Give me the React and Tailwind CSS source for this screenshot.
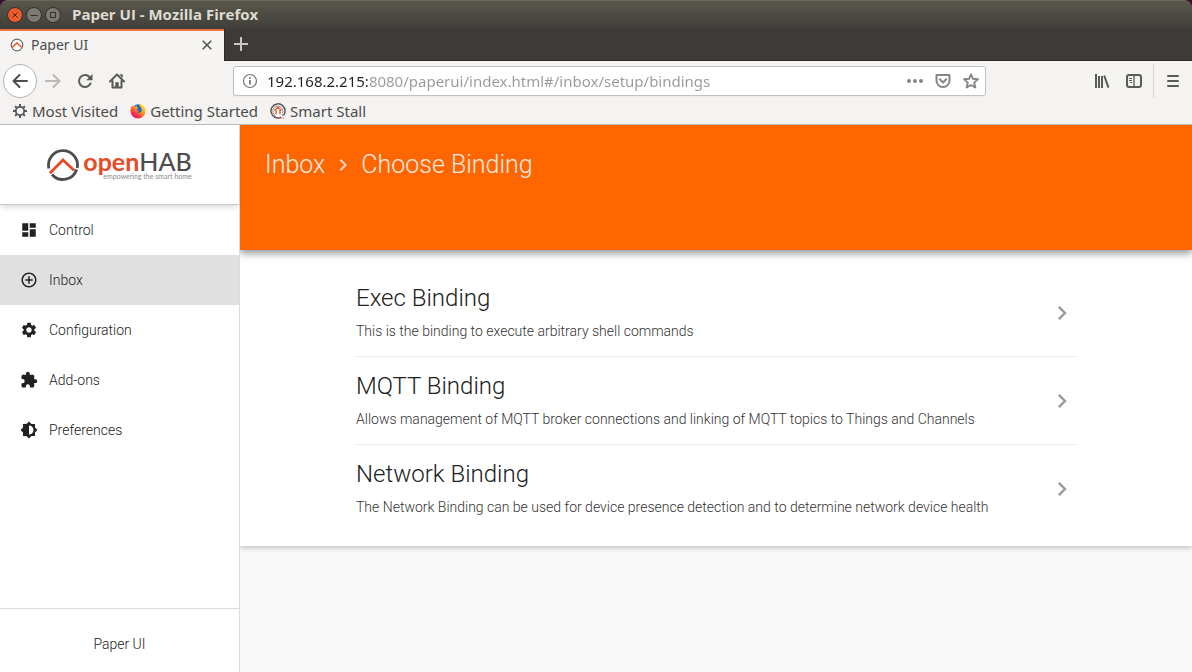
import { useState } from "react";
import {
  MdDashboard,
  MdAddCircleOutline,
  MdSettings,
  MdExtension,
  MdBrightness6,
  MdChevronRight,
} from "react-icons/md";

const menu = [
  { name: "Control", icon: MdDashboard },
  { name: "Inbox", icon: MdAddCircleOutline },
  { name: "Configuration", icon: MdSettings },
  { name: "Add-ons", icon: MdExtension },
  { name: "Preferences", icon: MdBrightness6 },
];

const bindings = [
  {
    name: "Exec Binding",
    text: "This is the binding to execute arbitrary shell commands",
  },
  {
    name: "MQTT Binding",
    text: "Allows management of MQTT broker connections and linking of MQTT topics to Things and Channels",
  },
  {
    name: "Network Binding",
    text: "The Network Binding can be used for device presence detection and to determine network device health",
  },
];

// round window button, d is the sign inside
function WindowButton({ label, color, d }) {
  return (
    <button
      type="button"
      aria-label={label}
      className={`flex h-4 w-4 items-center justify-center rounded-full border border-[#33312c] ${color}`}
    >
      <svg width="14" height="14" viewBox="0 0 14 14" fill="none" stroke="#3a2c22" className="shrink-0">
        <path d={d} />
      </svg>
    </button>
  );
}

function ToolButton({ label, children }) {
  return (
    <button
      type="button"
      aria-label={label}
      className="flex h-8 w-8 shrink-0 items-center justify-center text-[#5a5a58]"
    >
      {children}
    </button>
  );
}

function Favicon() {
  return (
    <svg width="14" height="14" viewBox="0 0 14 14" fill="none">
      <circle cx="7" cy="7" r="7" fill="#fff" />
      <circle cx="7" cy="7" r="5.8" stroke="#6b6b6b" strokeWidth="1.2" />
      <path d="M2 9.6 7 5l4.6 4.2" stroke="#e64a19" strokeWidth="1.3" />
    </svg>
  );
}

function FirefoxLogo() {
  return (
    <svg width="16" height="16" viewBox="0 0 16 16">
      <defs>
        <linearGradient id="fox" x1="0.8" y1="0.1" x2="0.2" y2="0.9">
          <stop offset="0" stopColor="#ffe226" />
          <stop offset="0.4" stopColor="#ff9a1a" />
          <stop offset="0.75" stopColor="#ff3647" />
          <stop offset="1" stopColor="#e31587" />
        </linearGradient>
      </defs>
      <circle cx="8.2" cy="7.2" r="6" fill="#1565d8" />
      <path
        d="M2.2 2.2c.3.7.7 1.1 1.2 1.4.8-.3 1.5-.3 2.1-.1.5-.7 1.1-1.1 1.7-1.3-.5.7-.5 1.5-.1 2 .5.4 1.2.4 1.4.8-.2.7-1.3.9-1.6 1.4-.2.4.1.8-.3 1 1.3-.4 2.1.3 2.9.2-.5.9-1.7 1.5-3 1.2 1.2 1.6 4.3 1.1 5-.9.6-1.9-.2-3.3-1.3-4.2C9.5 2.9 9.2 1.7 9.5.6c3.5.8 6 3.8 6 7.4a7.5 7.5 0 0 1-15 .1C.5 5.8 1.4 3.4 2.2 2.2Z"
        fill="url(#fox)"
      />
    </svg>
  );
}

function StallLogo() {
  return (
    <svg width="16" height="16" viewBox="0 0 16 16" fill="none">
      <circle cx="8" cy="7.7" r="7.5" fill="#fff" />
      <path d="M11 14.2A7 7 0 1 1 15 8c0 2.500-1 4-2.600 4" stroke="#5c5854" strokeWidth="1.5" />
      <path d="M5.5 12.5A5 5 0 1 1 12.5 10" stroke="#8a8580" />
      <path d="M4.5 7.5 8 4.200l3.500 3.300M6 7v4.200M10 7v4.200" stroke="#e8613c" strokeWidth="1.5" />
      <path d="M9 15h5" stroke="#e8613c" strokeWidth="1.2" strokeDasharray="1.3 .6" />
    </svg>
  );
}

function GearOutline() {
  return (
    <svg width="14" height="14" viewBox="0 0 14 14" fill="none" stroke="#555">
      <circle cx="7" cy="7" r="4.2" strokeWidth="1.8" />
      <path
        d="M7 0v2.500M7 11.500v2.500M0 7h2.500M11.500 7h2.500M2.100 2.100l1.700 1.700M10.200 10.200l1.700 1.700M2.100 11.900l1.700-1.700M10.200 3.800l1.700-1.700"
        strokeWidth="2"
      />
    </svg>
  );
}

function Browser() {
  const [url, setUrl] = useState(
    "192.168.2.215:8080/paperui/index.html#/inbox/setup/bindings"
  );

  return (
    <header className="relative z-20 bg-[#3c3b37] font-['Noto_Sans',sans-serif]">
      {/* TITLE BAR */}
      <div className="bg-[#3b0c30]">
        <div className="flex h-[29px] items-center gap-[3px] rounded-t-lg border-t border-[#69675a] bg-linear-to-b from-[#59574c] to-[#3f3e39] pl-[7px]">
          <WindowButton label="Close" color="bg-[#ee5a2a]" d="M4.5 4.5l5 5M9.5 4.5l-5 5" />
          <WindowButton label="Minimize" color="bg-[#7c7a72]" d="M3.5 7.5h7" />
          <WindowButton label="Maximize" color="bg-[#7c7a72]" d="M4.5 4.5h5v5h-5z" />
          <span className="ml-2 pb-0.5 font-['Open_Sans',sans-serif] text-[15px] font-bold leading-5 text-[#dfdbd2]">
            Paper UI - Mozilla Firefox
          </span>
        </div>
      </div>

      {/* TABS */}
      <div className="flex h-8">
        <div className="flex w-56 items-center border-t-2 border-[#f0743e] bg-[#f5f4f2] pb-0.5 pl-[10px] pr-[9px] text-sm text-[#4c4c4c]">
          <Favicon />
          <span className="ml-[7px] flex-1">Paper UI</span>
          <button type="button" aria-label="Close tab" className="flex h-4 w-4 items-center justify-center">
            <svg width="10" height="10" viewBox="0 0 10 10" stroke="#555" strokeWidth="1.6">
              <path d="M.7.7l8.6 8.6M9.300.7.7 9.300" />
            </svg>
          </button>
        </div>
        <div className="flex flex-1 items-center border-b border-l border-[#2b2a27] pb-0.5 pl-[9px]">
          <button type="button" aria-label="New tab">
            <svg width="14" height="14" viewBox="0 0 14 14" stroke="#cbc6c0" strokeWidth="2">
              <path d="M7 0v14M0 7h14" />
            </svg>
          </button>
        </div>
      </div>

      <div className="border-b border-[#bcbab6] bg-[#f4f3f1] text-[#4c4c4c]">
        {/* TOOLBAR */}
        <div className="flex h-10 items-center px-[3px]">
          <button
            type="button"
            aria-label="Back"
            className="flex h-[34px] w-[34px] shrink-0 items-center justify-center rounded-full border border-[#b5b3b0] bg-white text-[#4c4c4c]"
          >
            <svg width="16" height="16" viewBox="0 0 16 16" fill="none" stroke="currentColor" strokeWidth="2" strokeLinecap="round" strokeLinejoin="round">
              <path d="M15 8H1.500M7.500 2l-6 6 6 6" />
            </svg>
          </button>
          <ToolButton label="Forward">
            <svg width="16" height="16" viewBox="0 0 16 16" fill="none" stroke="#b9b8b6" strokeWidth="2" strokeLinecap="round" strokeLinejoin="round">
              <path d="M1 8h13.500M8.500 2l6 6-6 6" />
            </svg>
          </ToolButton>
          <ToolButton label="Reload">
            <svg width="16" height="16" viewBox="0 0 16 16" fill="none" stroke="currentColor" strokeWidth="2" strokeLinecap="round">
              <path d="M13.500 10.500A6 6 0 1 1 12.500 4" />
              <path d="M15.500 1v6.200H9.300z" fill="currentColor" stroke="none" />
            </svg>
          </ToolButton>
          <ToolButton label="Home">
            <svg width="16" height="16" viewBox="0 0 16 16" fill="none" stroke="currentColor" strokeWidth="2" strokeLinecap="round" strokeLinejoin="round">
              <path d="M1 8.500 8 1.500l7 7M3.500 8v6.500h9V8" />
              <path d="M6.300 14V9.200h3.400V14z" fill="currentColor" stroke="none" />
              <path d="M11.500 2h1.500v2" strokeWidth="1.5" />
            </svg>
          </ToolButton>

          <div className="mx-[100px] flex h-[30px] min-w-0 flex-1 items-center rounded-[3px] border border-[#c4c2bf] bg-white pl-2 pr-[6px] shadow-xs">
            <svg width="16" height="16" viewBox="0 0 16 16" fill="none" stroke="#777" className="shrink-0">
              <circle cx="8" cy="8" r="6.5" strokeWidth="1.2" />
              <path d="M8 7v4.500M8 4.300v1.600" strokeWidth="1.8" />
            </svg>
            <input
              type="text"
              aria-label="Address"
              value={url}
              onChange={(e) => setUrl(e.target.value)}
              className="ml-[9px] min-w-0 flex-1 bg-[linear-gradient(to_right,#222_102px,#999_102px)] bg-clip-text text-[15px] leading-5 text-transparent outline-none"
            />
            <div className="flex items-center gap-3 text-[#858585]">
              <button type="button" aria-label="Page actions">
                <svg width="16" height="16" viewBox="0 0 16 16" fill="currentColor">
                  <circle cx="2" cy="8" r="2" />
                  <circle cx="8" cy="8" r="2" />
                  <circle cx="14" cy="8" r="2" />
                </svg>
              </button>
              <button type="button" aria-label="Save to Pocket">
                <svg width="16" height="16" viewBox="0 0 16 16" fill="none" stroke="currentColor" strokeWidth="2" strokeLinecap="round" strokeLinejoin="round">
                  <path d="M1.500 2h13v5.500a6.500 6.500 0 0 1-13 0z" />
                  <path d="M4.800 6.300 8 9.500l3.200-3.200" />
                </svg>
              </button>
              <button type="button" aria-label="Bookmark this page">
                <svg width="16" height="16" viewBox="0 0 16 16" fill="none" stroke="currentColor" strokeWidth="1.9" strokeLinejoin="round">
                  <path d="M8 1.300l2 4.500 4.900.5-3.700 3.300 1.100 4.900L8 12l-4.300 2.500 1.100-4.900L1.100 6.300 6 5.800z" />
                </svg>
              </button>
            </div>
          </div>

          <ToolButton label="Library">
            <svg width="16" height="16" viewBox="0 0 16 16" fill="none" stroke="currentColor" strokeWidth="2">
              <path d="M2 1v14M5 3v12M8 3v12M10.200 2.500l4.300 12.200" />
            </svg>
          </ToolButton>
          <ToolButton label="Sidebars">
            <svg width="16" height="16" viewBox="0 0 16 16" fill="none" stroke="currentColor">
              <rect x="1" y="2" width="14" height="12" rx="2" strokeWidth="2" />
              <path d="M8 2v12" strokeWidth="1.3" />
              <path d="M3 5.500h3M3 7.500h3M4 9.500h2" />
            </svg>
          </ToolButton>
          <div className="ml-[3px] mr-[3px] h-[34px] w-px shrink-0 bg-[#d7d5d2]" />
          <ToolButton label="Menu">
            <svg width="16" height="16" viewBox="0 0 16 16" stroke="currentColor" strokeWidth="2">
              <path d="M3 3h10M3 8h10M3 13h10" strokeLinecap="round" />
            </svg>
          </ToolButton>
        </div>

        {/* BOOKMARKS */}
        <nav className="flex h-[23px] items-center gap-3 pb-[3px] pl-[13px] text-[15px] leading-5">
          <a href="#most" className="flex items-center gap-[5px]">
            <GearOutline />
            Most Visited
          </a>
          <a href="#start" className="flex items-center gap-1">
            <FirefoxLogo />
            Getting Started
          </a>
          <a href="#stall" className="flex items-center gap-1">
            <StallLogo />
            Smart Stall
          </a>
        </nav>
      </div>
    </header>
  );
}

function Logo() {
  return (
    <div className="flex items-center gap-1">
      <svg width="32" height="32" viewBox="0 0 32 32" fill="none">
        <path d="M1.900 19.500A14.500 14.500 0 1 1 30.200 19M29.700 20.500A14.500 14.500 0 0 1 5 25.500" stroke="#4d4d4f" strokeWidth="2.8" />
        <path d="M2.800 24.300 16 11l11.200 10.500" stroke="#e64a26" strokeWidth="2.8" />
      </svg>
      <div className="flex flex-col items-end font-['Lato',sans-serif] font-normal">
        <span className="text-[25px] font-medium leading-6 text-[#4d4d4f]">
          <span className="font-bold text-[#e64a26]">open</span>HAB
        </span>
        <span className="text-[7px] leading-[7px] text-[#8a8a8a]">
          empowering the smart home
        </span>
      </div>
    </div>
  );
}

export default function App() {
  const [active, setActive] = useState("Inbox");

  return (
    <div className="flex min-h-screen flex-col bg-[#f8f8f8]">
      <Browser />

      <div className="flex flex-1 font-['Roboto',sans-serif] text-sm font-light text-[#212121]">
        {/* SIDEBAR */}
        <aside className="relative z-10 flex w-60 shrink-0 flex-col border-r border-[#dcdcdc] bg-white">
          <div className="flex h-20 items-center justify-center border-b border-[#c8c8c8] shadow-md">
            <Logo />
          </div>
          <nav className="flex-1">
            {menu.map(({ name, icon: Icon }) => (
              <a
                key={name}
                href={`#${name}`}
                onClick={() => setActive(name)}
                className={`flex h-[50px] items-center gap-[11px] pl-5 ${
                  active === name ? "bg-[#e0e0e0]" : ""
                }`}
              >
                <Icon size={18} />
                {name}
              </a>
            ))}
          </nav>
          <footer className="flex h-16 items-center justify-center border-t border-[#dcdcdc] pt-[7px]">
            Paper UI
          </footer>
        </aside>

        {/* CONTENT */}
        <main className="min-w-0 flex-1">
          <div className="relative h-[125px] bg-[#ff6600] px-[25px] pt-6 shadow-[0_3px_8px_rgba(0,0,0,0.45)]">
            <h1 className="flex items-center text-[25px] leading-8 text-[#f5ebe4]">
              <a href="#inbox">Inbox</a>
              <MdChevronRight size={24} className="mx-[6px] text-[#e8d5c8]" />
              Choose Binding
            </h1>
          </div>

          <div className="bg-white pb-[14px] pt-[19px] shadow-[0_2px_5px_rgba(0,0,0,0.22)]">
            <ul className="mx-auto max-w-[720px]">
              {bindings.map((b) => (
                <li key={b.name} className="border-b border-[#ececec] last:border-b-0">
                  <a href="#binding" className="flex h-[87px] items-center">
                    <div className="flex-1 pb-[3px]">
                      <h2 className="text-2xl leading-8">{b.name}</h2>
                      <p className="mt-[7px] leading-5 text-[#333]">{b.text}</p>
                    </div>
                    <MdChevronRight size={28} className="text-[#999]" />
                  </a>
                </li>
              ))}
            </ul>
          </div>
        </main>
      </div>
    </div>
  );
}
